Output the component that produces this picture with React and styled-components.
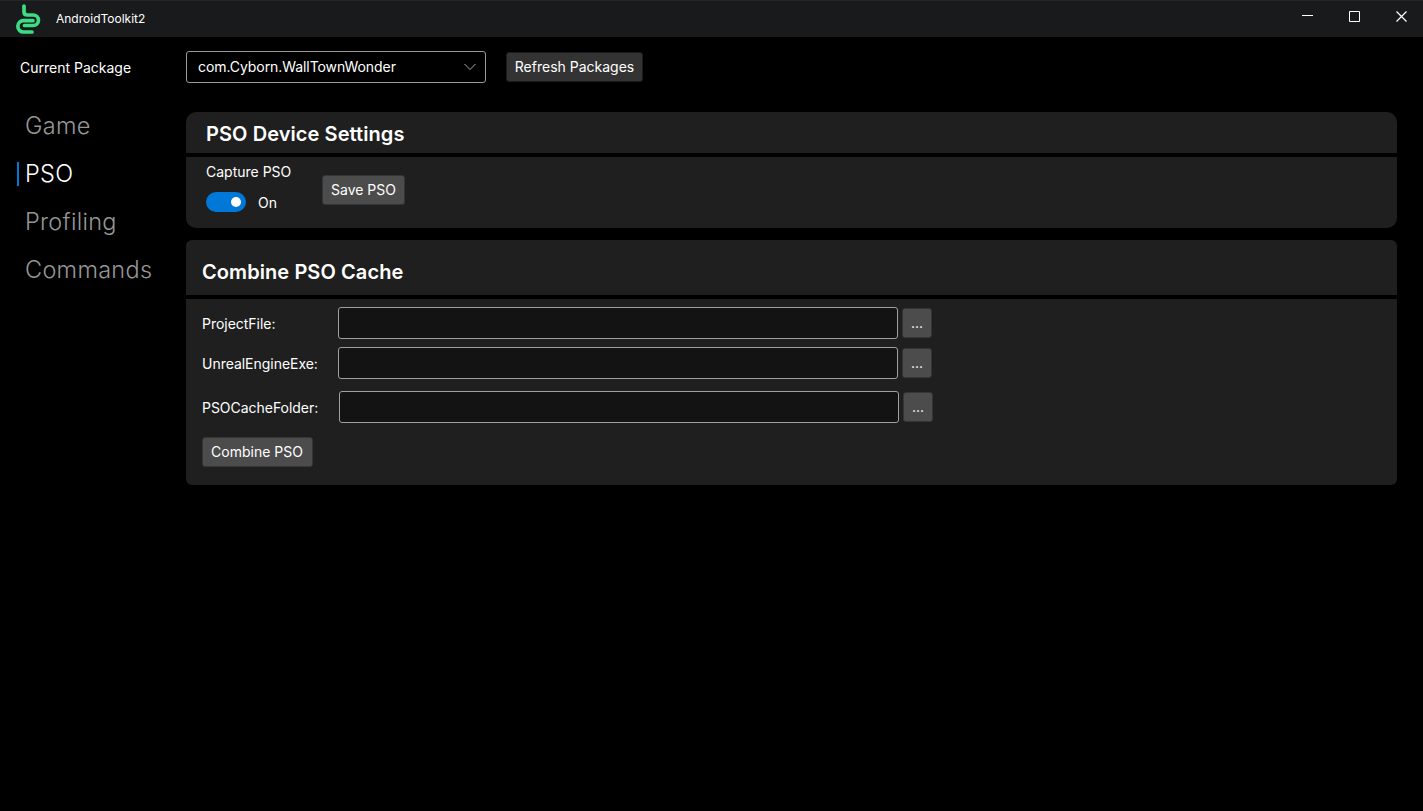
import React from "react";
import styled, { createGlobalStyle } from "styled-components";

const Global = createGlobalStyle`
  * { box-sizing: border-box; }
  body { margin: 0; background: #000; overflow: hidden; }
  button { font: inherit; color: inherit; letter-spacing: inherit; }
`;

const Window = styled.div`
  width: 1423px;
  height: 811px;
  background: #000;
  color: #fff;
  font-family: Inter, "Noto Sans", sans-serif;
  font-size: 14px;
  line-height: 20px;
  display: flex;
  flex-direction: column;
`;

const TitleBar = styled.header`
  height: 37px;
  flex: none;
  display: flex;
  align-items: flex-start;
  background: #191a1c;
  border-top: 1px solid #242527;
  padding-left: 14px;
`;

const Logo = styled.svg`
  width: 28px;
  height: 36px;
`;

const AppName = styled.span`
  font-size: 12px;
  line-height: 16px;
  margin: 10px auto 0 14px;
`;

const WindowButtons = styled.div`
  display: flex;
  margin-right: -2px;
`;

const WindowButton = styled.button`
  width: 47px;
  height: 30px;
  padding: 0;
  border: 0;
  background: none;
  display: flex;
  align-items: center;
  justify-content: center;
`;

const Toolbar = styled.div`
  height: 59px;
  padding: 14px 0 0 20px;
  display: flex;
  align-items: flex-start;
`;

const ToolbarLabel = styled.span`
  width: 166px;
  line-height: 34px;
`;

const Select = styled.div`
  width: 300px;
  height: 32px;
  border: 1px solid #999;
  border-radius: 3px;
  padding: 0 9px 0 11px;
  letter-spacing: -0.07px;
  display: flex;
  align-items: center;
  justify-content: space-between;
`;

const Button = styled.button`
  width: ${(p) => p.$width}px;
  height: 30px;
  flex: none;
  padding: 0 ${(p) => p.$inset || 0}px 0 0;
  border: 1px solid ${(p) => (p.$dark ? "#1c1c1c" : "#353535")};
  border-radius: 3px;
  background: ${(p) => (p.$dark ? "#333" : "#4c4c4c")};
  line-height: 28px;
  text-align: center;
  white-space: nowrap;
  margin: ${(p) => p.$margin || 0};
`;

const Body = styled.div`
  flex: 1;
  display: flex;
`;

const Nav = styled.nav`
  width: 186px;
  padding: 6px 0 0 17px;
`;

const NavItem = styled.a`
  height: 48px;
  display: flex;
  align-items: center;
  font-size: 23.5px;
  line-height: 30px;
  font-weight: 300;
  letter-spacing: 0.28px;
  color: ${(p) => (p.$active ? "#fff" : "#969696")};

  &::before {
    content: "";
    width: 2px;
    height: 24px;
    margin-right: 6px;
    background: ${(p) => (p.$active ? "#0078d7" : "transparent")};
  }
`;

const Content = styled.main`
  width: 1211px;
  padding-top: 16px;
`;

const Panel = styled.section`
  border-radius: ${(p) => p.$radius}px;
  overflow: hidden;
  margin-bottom: 12px;
`;

const PanelHeader = styled.h2`
  margin: 0 0 4px;
  height: ${(p) => p.$height}px;
  padding: ${(p) => p.$padding};
  background: #1f1f1f;
  font-size: 20px;
  line-height: 28px;
  font-weight: 600;
  letter-spacing: 0.08px;
`;

const DeviceSettings = styled.div`
  height: 71px;
  padding: 5px 20px 0;
  background: #1f1f1f;
  display: flex;
`;

const Capture = styled.div`
  width: 116px;
`;

const SwitchRow = styled.div`
  display: flex;
  align-items: center;
  gap: 12px;
  height: 20px;
  margin-top: 10px;
`;

const SwitchState = styled.span`
  padding-top: 2px;
`;

const Switch = styled.span`
  width: 40px;
  height: 20px;
  border-radius: 10px;
  background: #0078d7;
  display: flex;
  align-items: center;
  justify-content: flex-end;
  padding-right: 5px;

  &::after {
    content: "";
    width: 10px;
    height: 10px;
    border-radius: 50%;
    background: #fff;
  }
`;

const Form = styled.div`
  height: 186px;
  padding: 8px 16px 0;
  background: #1f1f1f;
`;

const Field = styled.label`
  display: flex;
  align-items: center;
  height: 32px;
  margin-bottom: ${(p) => p.$gap}px;
`;

const FieldLabel = styled.span`
  width: ${(p) => p.$width}px;
  padding-top: 2px;
  letter-spacing: -0.03px;
`;

const Input = styled.input`
  width: 560px;
  height: 32px;
  margin: 0 4px 0 0;
  border: 1px solid #a0a0a0;
  border-radius: 3px;
  background: #131313;
  color: #fff;
`;

const fields = [
  { label: "ProjectFile:", width: 136, gap: 8 },
  { label: "UnrealEngineExe:", width: 136, gap: 12 },
  { label: "PSOCacheFolder:", width: 137, gap: 14 },
];

export default function App() {
  return (
    <Window>
      <Global />
      <TitleBar>
        <Logo viewBox="14 1 28 36" fill="none" stroke="#3ddc84" strokeWidth="3.700" strokeLinecap="round" strokeLinejoin="round">
          <path d="M24 6v6q0 3 3.500 3H33.200a5.200 5.200 0 0 1 0 10.500H24.500" />
          <path d="M33 20.700H23.500a5.650 5.650 0 0 0 0 11.300H32" />
        </Logo>
        <AppName>AndroidToolkit2</AppName>
        <WindowButtons>
          <WindowButton aria-label="Minimize">
            <svg width="11" height="11"><path d="M0 4.500h11" stroke="#fff" /></svg>
          </WindowButton>
          <WindowButton aria-label="Maximize">
            <svg width="11" height="11"><path d="M.5.5h10v10H.5z" fill="none" stroke="#fff" /></svg>
          </WindowButton>
          <WindowButton aria-label="Close">
            <svg width="11" height="11"><path d="M.5.5l10 10M10.500.5l-10 10" stroke="#fff" strokeWidth="1.200" /></svg>
          </WindowButton>
        </WindowButtons>
      </TitleBar>
      <Toolbar>
        <ToolbarLabel>Current Package</ToolbarLabel>
        <Select>
          com.Cyborn.WallTownWonder
          <svg width="12" height="8"><path d="M.5 1l5.500 5.500L11.500 1" fill="none" stroke="#aaa" /></svg>
        </Select>
        <Button $dark $width={137} $margin="1px 0 0 20px">Refresh Packages</Button>
      </Toolbar>
      <Body>
        <Nav>
          <NavItem>Game</NavItem>
          <NavItem $active>PSO</NavItem>
          <NavItem>Profiling</NavItem>
          <NavItem>Commands</NavItem>
        </Nav>
        <Content>
          <Panel $radius={10}>
            <PanelHeader $height={41} $padding="8px 20px 0">PSO Device Settings</PanelHeader>
            <DeviceSettings>
              <Capture>
                Capture PSO
                <SwitchRow><Switch /><SwitchState>On</SwitchState></SwitchRow>
              </Capture>
              <Button $width={83} $margin="13px 0 0">Save PSO</Button>
            </DeviceSettings>
          </Panel>
          <Panel $radius={6}>
            <PanelHeader $height={55} $padding="18px 16px 0">Combine PSO Cache</PanelHeader>
            <Form>
              {fields.map((f) => (
                <Field key={f.label} $gap={f.gap}>
                  <FieldLabel $width={f.width}>{f.label}</FieldLabel>
                  <Input />
                  <Button $width={30}>...</Button>
                </Field>
              ))}
              <Button $width={111} $inset={1}>Combine PSO</Button>
            </Form>
          </Panel>
        </Content>
      </Body>
    </Window>
  );
}
